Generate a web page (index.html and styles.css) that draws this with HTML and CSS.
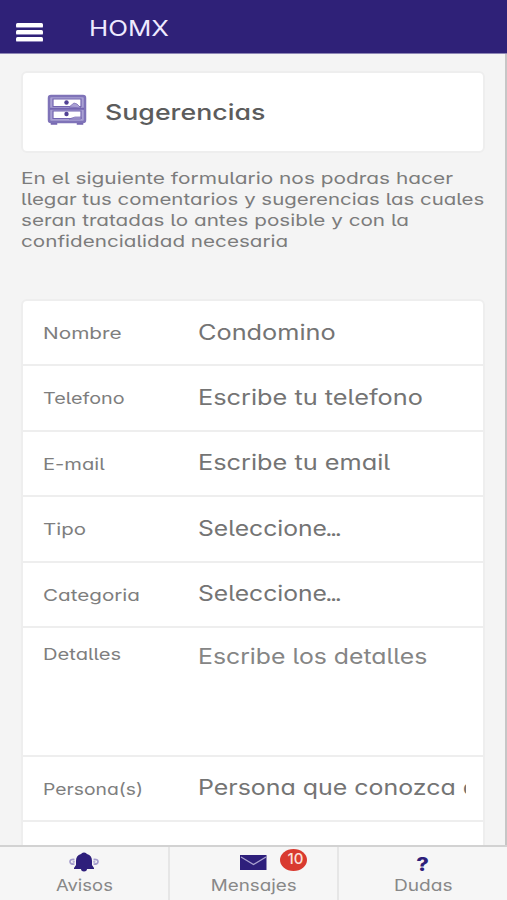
FILE: index.html
```
<!DOCTYPE html>
<html lang="es">
<head>
<meta charset="utf-8">
<title>HOMX</title>
<link rel="stylesheet" href="styles.css">
</head>
<body>
<div class="app">
  <header class="topbar">
    <div class="menu"><i></i><i></i><i></i></div>
    <h1 class="brand"><span class="t">HOMX</span></h1>
  </header>
  <main class="content">
    <section class="title-card">
      <svg class="drawer" viewBox="0 0 40 32" width="40" height="32">
        <path d="M5 27v2.500h4V27M31 27v2.500h4V27" fill="#7566b0" stroke="#7566b0" stroke-width="2.500"/>
        <rect x="2" y="2" width="36" height="26" rx="2" fill="#a9a0d3" stroke="#7f73b8" stroke-width="2.500"/>
        <path d="M6 5h28v7.500H6zM6 17h28v7.500H6z" fill="#fff" stroke="#7365b0" stroke-width="1.200"/>
        <path d="M3 14.700h34" stroke="#7365b0" stroke-width="2"/>
        <path d="M22 13l5-4 3 1 4 4zM22 25l6-2h6v2z" fill="#a9a0d3" stroke="#7365b0" stroke-width=".7"/>
        <circle cx="19.500" cy="8.500" r="2.200" fill="#514194"/><circle cx="19.500" cy="20" r="2.200" fill="#514194"/>
      </svg>
      <h2 class="heading"><span class="t">Sugerencias</span></h2>
    </section>
    <p class="intro">
      <span class="t l1">En el siguiente formulario nos podras hacer</span>
      <span class="t l2">llegar tus comentarios y sugerencias las cuales</span>
      <span class="t l3">seran tratadas lo antes posible y con la</span>
      <span class="t l4">confidencialidad necesaria</span>
    </p>
    <section class="form">
      <div class="row"><label class="t nombre">Nombre</label><div class="field"><span class="t">Condomino</span></div></div>
      <div class="row"><label class="t telefono">Telefono</label><div class="field"><span class="t">Escribe tu telefono</span></div></div>
      <div class="row"><label class="t email">E-mail</label><div class="field"><span class="t">Escribe tu email</span></div></div>
      <div class="row"><label class="t tipo">Tipo</label><div class="field select"><span class="t">Seleccione<span class="dots">...</span></span></div></div>
      <div class="row"><label class="t categoria">Categoria</label><div class="field select"><span class="t">Seleccione<span class="dots">...</span></span></div></div>
      <div class="row tall"><label class="t detalles">Detalles</label><div class="field area"><span class="t">Escribe los detalles</span></div></div>
      <div class="row"><label class="t personas">Persona(s)</label><div class="field persona"><span class="t">Persona que conozca d</span></div></div>
      <div class="row"></div>
    </section>
  </main>
  <nav class="tabs">
    <div class="tab avisos">
      <svg viewBox="0 0 30 22" width="30" height="22">
        <path d="M15 1.500c2 0 2 1 3 1.500 3.500 1 5 3.500 5 7v4l2 3v1h-7c0 1.500-1 2.500-3 2.500s-3-1-3-2.500H5v-1l2-3v-4c0-3.500 1.500-6 5-7 1-.5 1-1.500 3-1.500z" fill="#2e1f7b"/>
        <path d="M5.500 8.500Q1 8 1 10.700T5.500 13M24.500 8.500q4.500-.5 4.500 2.200T24.500 13" fill="none" stroke="#a59dcc" stroke-width="1.700"/>
        <circle cx="4.700" cy="10.700" r="1.200" fill="#b8b2d6"/><circle cx="25.300" cy="10.700" r="1.200" fill="#b8b2d6"/>
      </svg>
      <span class="t">Avisos</span>
    </div>
    <div class="tab mensajes">
      <div class="icon-wrap">
        <svg viewBox="0 0 27 22" width="27" height="22">
          <path d="M0 4h26.500v15H0z" fill="#2e1f7b"/>
          <path d="M1 6l12.500 7.500L26 6" fill="none" stroke="#aaa2d0" stroke-width="1.300"/>
        </svg>
        <b class="badge">10</b>
      </div>
      <span class="t">Mensajes</span>
    </div>
    <div class="tab dudas">
      <b class="question">?</b>
      <span class="t">Dudas</span>
    </div>
  </nav>
</div>
</body>
</html>
```
FILE: styles.css
```
* { box-sizing: border-box; }
body {
  margin: 0;
  font-family: Inter, "Liberation Sans", sans-serif;
  font-feature-settings: "cv11", "cv05";
  color: #777;
  background: #f4f4f4;
}
.app { display: flex; flex-direction: column; width: 507px; height: 900px; overflow: hidden; }

/* Wide rounded lettering: every text run is stretched horizontally */
.t { display: block; width: max-content; white-space: nowrap; transform: scaleX(var(--sx, 1.2)); transform-origin: 0 50%; }

.topbar { flex: none; height: 54px; display: flex; background: #2f2178; border-bottom: 1px solid #8d86b5; }
.menu { width: 27px; margin: 23px 46px 0 16px; display: flex; flex-direction: column; gap: 2px; }
.menu i { height: 5px; border-radius: 1.500px; background: #fff; border-bottom: 1px solid #8f86bb; }
.brand { margin: 16px 0 0; font-size: 21px; line-height: 26px; font-weight: 400; color: #eeeaff; --sx: 1.23; }

.content { flex: 1; min-height: 0; overflow: hidden; padding: 17px 20px 0 21px; border-right: 2px solid #c6c6c6; }
.title-card { height: 82px; display: flex; align-items: center; padding-left: 24px; background: #fff; border: 2px solid #eee; border-radius: 6px; }
.drawer { flex: none; margin-top: -4px; }
.heading { margin: -1px 0 0 18px; font-size: 22px; line-height: 28px; font-weight: 500; color: #5c5c5c; --sx: 1.215; }

.intro { margin: 15px 0 0; height: 84px; font-size: 16.500px; line-height: 21px; color: #7c7c7c; }
.l1 { --sx: 1.264; }
.l2 { --sx: 1.238; }
.l3 { --sx: 1.254; }
.l4 { --sx: 1.252; }

.form { margin-top: 47px; background: #fff; border: 2px solid #eee; border-radius: 6px; }
.row { height: 65.500px; display: grid; grid-template-columns: 155px 1fr; align-items: center; padding: 0 18px 0 20px; border-bottom: 2px solid #eee; }
.row:first-child { height: 65px; }
.row label { font-size: 16.500px; line-height: 22px; margin-top: 1px; color: #7e7e7e; }
.field { font-size: 21px; line-height: 28px; overflow: hidden; color: #747474; --sx: 1.205; }
.select { --sx: 1.175; }
.dots { letter-spacing: -2px; margin-left: -1.500px; }
.tall { height: 128.500px; align-items: start; }
.tall label { margin-top: 15px; }
.area { margin-top: 15px; color: #858585; --sx: 1.18; }
.persona { --sx: 1.187; margin-right: -1px; }
.nombre { --sx: 1.26; }
.telefono { --sx: 1.2; }
.email { --sx: 1.22; }
.tipo { --sx: 1.24; }
.categoria { --sx: 1.25; }
.detalles { --sx: 1.22; }
.personas { --sx: 1.17; }

.tabs { flex: none; height: 55px; display: grid; grid-template-columns: 170px 169px 168px; background: #f6f6f6; border-top: 2px solid #d2d2d2; }
.tab { display: flex; flex-direction: column; align-items: center; padding-top: 4px; border-right: 2px solid #e6e6e6; color: #888; font-size: 16.500px; line-height: 20px; }
.tab:last-child { border-right: 0; }
.tab .t { transform-origin: 50% 50%; margin-top: 2px; }
.avisos { --sx: 1.12; }
.mensajes { --sx: 1.14; }
.dudas { --sx: 1.16; }
.tab svg { display: block; }
.icon-wrap { position: relative; }
.badge { position: absolute; left: 40px; top: -2px; width: 27px; height: 22px; border-radius: 50%; background: #d93a30; color: #fbe0dc; font-size: 15px; line-height: 20px; font-weight: 500; text-align: center; padding-left: 4px; }
.question { height: 22px; font-size: 19px; line-height: 28px; font-weight: 800; color: #2e1f7b; transform: scaleX(1.15); }
```
